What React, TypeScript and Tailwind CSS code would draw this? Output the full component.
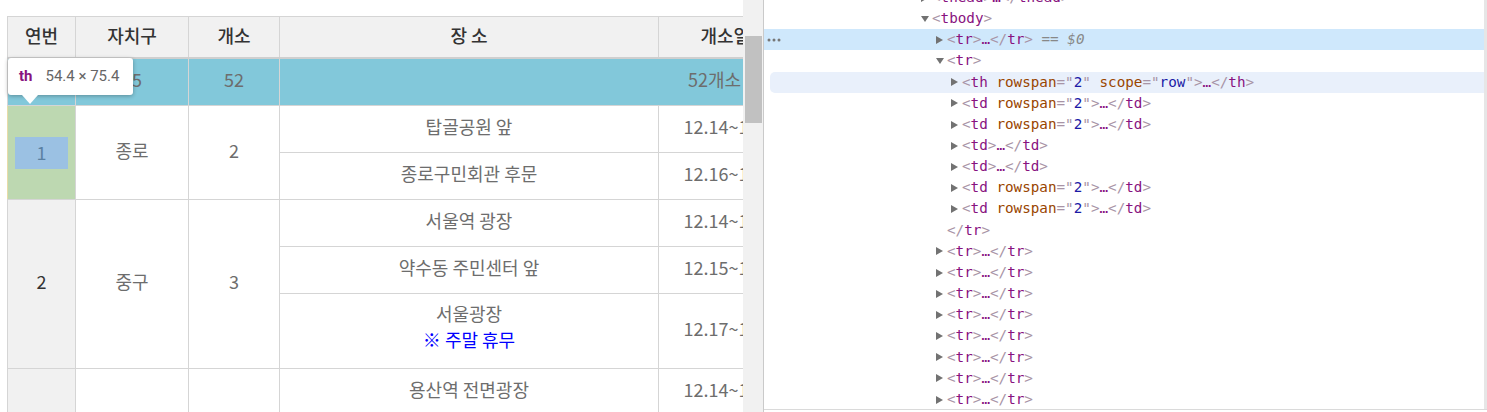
import React from 'react';

// devtools token helpers
const Br = ({ children }: { children: React.ReactNode }) => (
  <span className="text-[#a894a6]">{children}</span>
);
const Name = ({ children }: { children: React.ReactNode }) => (
  <span className="text-[#881280]">{children}</span>
);
const Open = ({ tag, attrs = [] }: { tag: string; attrs?: [string, string][] }) => (
  <>
    <Br>&lt;</Br>
    <Name>{tag}</Name>
    {attrs.map(([n, v]) => (
      <React.Fragment key={n}>
        {' '}
        <span className="text-[#994500]">{n}</span>
        <Br>="</Br>
        <span className="text-[#1a1aa6]">{v}</span>
        <Br>"</Br>
      </React.Fragment>
    ))}
    <Br>&gt;</Br>
  </>
);
const Close = ({ tag }: { tag: string }) => (
  <>
    <Br>&lt;/</Br>
    <Name>{tag}</Name>
    <Br>&gt;</Br>
  </>
);
const Ell = () => <span className="text-[#881280]">…</span>;

const Collapsed = ({ tag, attrs }: { tag: string; attrs?: [string, string][] }) => (
  <>
    <Open tag={tag} attrs={attrs} />
    <Ell />
    <Close tag={tag} />
  </>
);

type Line = {
  indent: string;
  arrow?: 'right' | 'down';
  selected?: boolean;
  hovered?: boolean;
  body: React.ReactNode;
};

const LINES: Line[] = [
  { indent: 'pl-[157px]', arrow: 'right', body: <Collapsed tag="thead" /> },
  { indent: 'pl-[157px]', arrow: 'down', body: <Open tag="tbody" /> },
  {
    indent: 'pl-[172px]',
    arrow: 'right',
    selected: true,
    body: (
      <>
        <Collapsed tag="tr" />
        <span className="text-[#888]">
          {' '}== <i>$0</i>
        </span>
      </>
    ),
  },
  { indent: 'pl-[172px]', arrow: 'down', body: <Open tag="tr" /> },
  {
    indent: 'pl-[181px]',
    arrow: 'right',
    hovered: true,
    body: <Collapsed tag="th" attrs={[['rowspan', '2'], ['scope', 'row']]} />,
  },
  { indent: 'pl-[187px]', arrow: 'right', body: <Collapsed tag="td" attrs={[['rowspan', '2']]} /> },
  { indent: 'pl-[187px]', arrow: 'right', body: <Collapsed tag="td" attrs={[['rowspan', '2']]} /> },
  { indent: 'pl-[187px]', arrow: 'right', body: <Collapsed tag="td" /> },
  { indent: 'pl-[187px]', arrow: 'right', body: <Collapsed tag="td" /> },
  { indent: 'pl-[187px]', arrow: 'right', body: <Collapsed tag="td" attrs={[['rowspan', '2']]} /> },
  { indent: 'pl-[187px]', arrow: 'right', body: <Collapsed tag="td" attrs={[['rowspan', '2']]} /> },
  { indent: 'pl-[172px]', body: <Close tag="tr" /> },
  ...Array.from({ length: 8 }, () => ({
    indent: 'pl-[172px]',
    arrow: 'right' as const,
    body: <Collapsed tag="tr" />,
  })),
];

const Arrow = ({ dir }: { dir?: 'right' | 'down' }) => (
  <span className="flex w-[11px] shrink-0 items-center">
    {dir === 'right' && (
      <svg width="7" height="8" viewBox="0 0 7 8">
        <path d="M0 0 L7 4 L0 8 Z" fill="#727272" />
      </svg>
    )}
    {dir === 'down' && (
      <svg width="8" height="6" viewBox="0 0 8 6">
        <path d="M0 0 H8 L4 6 Z" fill="#727272" />
      </svg>
    )}
  </span>
);

const cell = 'border border-[#d5d5d5] px-2 pt-[7px] pb-[13px] leading-[26px] text-center font-normal whitespace-nowrap';
const head =
  'border border-[#d5d5d5] border-b-2 border-b-[#cfcfcf] px-2 pt-[4px] pb-[8px] leading-[28px] text-center font-medium text-[#333] whitespace-nowrap';
const rowHead = `${cell} bg-[#f1f1f1] text-[#333]`;

const App: React.FC = () => {
  return (
    <div className="flex h-[412px] w-[1487px] overflow-hidden bg-white">
      {/* page with table */}
      <div className="relative w-[743px] shrink-0 overflow-hidden pl-[7px] pt-4">
        <table className="w-[1142px] table-fixed border-collapse font-['Noto_Sans_CJK_KR',sans-serif] text-[18px] text-[#6d6d6d]">
          <colgroup>
            <col className="w-[68px]" />
            <col className="w-[113px]" />
            <col className="w-[91px]" />
            <col className="w-[379px]" />
            <col className="w-[150px]" />
            <col className="w-[190px]" />
            <col className="w-[151px]" />
          </colgroup>
          <thead>
            <tr className="bg-[#f1f1f1]">
              <th className={head}>연번</th>
              <th className={head}>자치구</th>
              <th className={head}>개소</th>
              <th className={head}>장 소</th>
              <th className={head}>개소일자</th>
              <th className={head}>운영시간</th>
              <th className={head}>비고</th>
            </tr>
          </thead>
          <tbody>
            <tr className="bg-[#82c8da]">
              <th className={cell}>합계</th>
              <td className={cell}>25</td>
              <td className={cell}>52</td>
              <td className={cell} colSpan={4}>
                52개소
              </td>
            </tr>

            <tr>
              <th
                rowSpan={2}
                scope="row"
                className="border border-[#d5d5d5] border-l-[#e8dca8] bg-[#bdd8b1] px-[7px] text-center font-normal"
              >
                <div className="h-[32px] bg-[#9bc1e3] leading-[30px] text-[#5a80a2]">1</div>
              </th>
              <td rowSpan={2} className={cell}>
                종로
              </td>
              <td rowSpan={2} className={cell}>
                2
              </td>
              <td className={cell}>탑골공원 앞</td>
              <td className={cell}>12.14~12.31</td>
              <td rowSpan={2} className={cell}>
                10:00~18:00
              </td>
              <td rowSpan={2} className={cell}>
                -
              </td>
            </tr>
            <tr>
              <td className={cell}>종로구민회관 후문</td>
              <td className={cell}>12.16~12.31</td>
            </tr>

            <tr>
              <th rowSpan={3} scope="row" className={rowHead}>
                2
              </th>
              <td rowSpan={3} className={cell}>
                중구
              </td>
              <td rowSpan={3} className={cell}>
                3
              </td>
              <td className={cell}>서울역 광장</td>
              <td className={cell}>12.14~12.31</td>
              <td rowSpan={3} className={cell}>
                10:00~18:00
              </td>
              <td rowSpan={3} className={cell}>
                -
              </td>
            </tr>
            <tr>
              <td className={cell}>약수동 주민센터 앞</td>
              <td className={cell}>12.15~12.31</td>
            </tr>
            <tr>
              <td className="border border-[#d5d5d5] px-2 pt-[6px] pb-[16px] text-center leading-[26px] whitespace-nowrap">
                서울광장
                <br />
                <span className="text-[#0000ff]">※ 주말 휴무</span>
              </td>
              <td className={cell}>12.17~12.31</td>
            </tr>

            <tr>
              <th rowSpan={3} scope="row" className={rowHead}>
                3
              </th>
              <td rowSpan={3} className={cell}>
                용산
              </td>
              <td rowSpan={3} className={cell}>
                3
              </td>
              <td className={cell}>용산역 전면광장</td>
              <td className={cell}>12.14~12.31</td>
              <td rowSpan={3} className={cell}>
                10:00~18:00
              </td>
              <td rowSpan={3} className={cell}>
                -
              </td>
            </tr>
            <tr>
              <td className={cell}>이태원역 앞</td>
              <td className={cell}>12.15~12.31</td>
            </tr>
            <tr>
              <td className={cell}>용산구청 앞</td>
              <td className={cell}>12.16~12.31</td>
            </tr>
          </tbody>
        </table>

        {/* inspector tooltip */}
        <div className="absolute left-[8px] top-[58px] flex h-[37px] w-[125px] items-center gap-[13px] rounded-[3px] bg-white px-[11px] font-['Roboto',sans-serif] text-[15px] whitespace-nowrap shadow-[0_1px_4px_rgba(0,0,0,0.3)]">
          <span className="font-bold text-[#881280]">th</span>
          <span className="text-[#666]">54.4 × 75.4</span>
        </div>
        <div className="absolute left-[22px] top-[95px] h-0 w-0 border-x-[8px] border-t-[9px] border-x-transparent border-t-white" />
      </div>

      {/* page scrollbar */}
      <div className="w-[20px] shrink-0 bg-[#f1f1f1] pl-[2px] pr-[1px] pt-[36px]">
        <div className="h-[87px] bg-[#c1c1c1]" />
      </div>

      {/* devtools elements panel */}
      <div className="flex flex-1 flex-col border-l border-[#cacaca]">
        <div className="flex h-[410px] border-b border-[#dadada]">
          <div className="flex-1 overflow-hidden">
            <div className="-mt-[13px] font-['DejaVu_Sans_Mono',monospace] text-[14.27px] whitespace-pre">
              {LINES.map((l, i) => (
                <div
                  key={i}
                  className={`relative flex h-[21.17px] items-center ${l.indent} ${
                    l.selected ? 'bg-[#cfe8fc]' : ''
                  } ${l.hovered ? 'ml-[6px] rounded-l-[5px] bg-[#e9f0fb]' : ''}`}
                >
                  {l.selected && (
                    <svg className="absolute left-[3px] top-[9px]" width="14" height="4" viewBox="0 0 14 4">
                      <circle cx="2" cy="2" r="1.5" fill="#777" />
                      <circle cx="7" cy="2" r="1.5" fill="#777" />
                      <circle cx="12" cy="2" r="1.5" fill="#777" />
                    </svg>
                  )}
                  <Arrow dir={l.arrow} />
                  <span>{l.body}</span>
                </div>
              ))}
            </div>
          </div>
          <div className="w-[3px] shrink-0 bg-[#e6e6e6]" />
        </div>
      </div>
    </div>
  );
};

export default App;
